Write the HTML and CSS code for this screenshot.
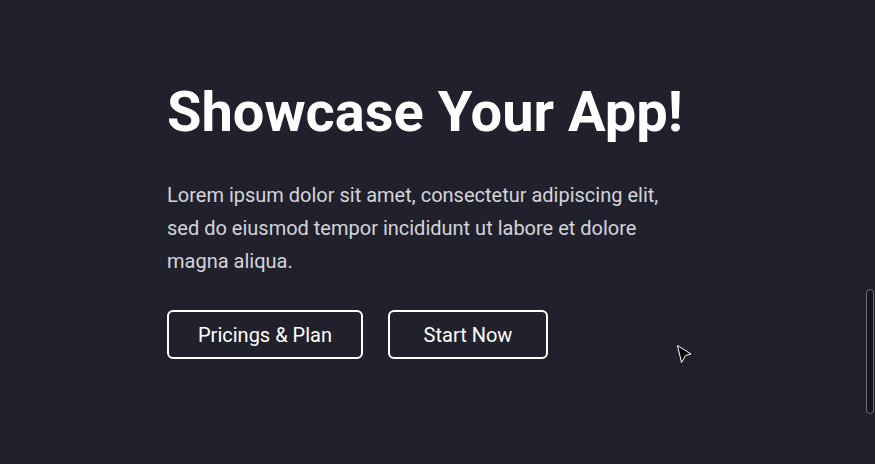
FILE: index.html
```html
<!DOCTYPE html>
<html>
<head>
<meta charset="utf-8">
<link rel="stylesheet" href="styles.css">
</head>
<body>
<main class="hero">
  <h1 class="title">Showcase Your App!</h1>
  <p class="lead">Lorem ipsum dolor sit amet, consectetur adipiscing elit, sed do eiusmod tempor incididunt ut labore et dolore magna aliqua.</p>
  <div class="actions">
    <a class="btn">Pricings &amp; Plan</a>
    <a class="btn btn-wide">Start Now</a>
  </div>
</main>
<div class="scrollbar"><div class="thumb"></div></div>
<svg class="cursor" width="18" height="22" viewBox="0 0 18 22"><path d="M1.5 1.5 L15 10 L9.5 11.5 L5.5 18.5 Z" fill="#000" stroke="#fff" stroke-width="1" stroke-linejoin="round"/></svg>
</body>
</html>
```
FILE: styles.css
```css
html, body {
  margin: 0;
  height: 100%;
}
body {
  background: #21212d;
  font-family: Roboto, "Liberation Sans", sans-serif;
  color: #fff;
  overflow: hidden;
  position: relative;
}
.hero {
  padding: 78px 0 0 167px;
}
.title {
  margin: 0;
  font-size: 56px;
  font-weight: 700;
  line-height: 68px;
  white-space: nowrap;
}
.lead {
  margin: 33px 0 0;
  max-width: 505px;
  font-size: 20px;
  line-height: 33px;
  color: #d4d4da;
}
.actions {
  display: flex;
  gap: 25px;
  margin-top: 32px;
}
.btn {
  display: flex;
  align-items: center;
  justify-content: center;
  height: 45px;
  padding: 0 29px;
  border: 2px solid #fff;
  border-radius: 6px;
  font-size: 20px;
  color: #fff;
}
.btn-wide {
  min-width: 160px;
  box-sizing: border-box;
  height: 49px;
}
.scrollbar {
  position: absolute;
  right: 1px;
  top: 289px;
}
.thumb {
  width: 6px;
  height: 123px;
  border: 1px solid #6e6e78;
  border-radius: 4px;
  background: #15151c;
}
.cursor {
  position: absolute;
  left: 676px;
  top: 344px;
}
```
